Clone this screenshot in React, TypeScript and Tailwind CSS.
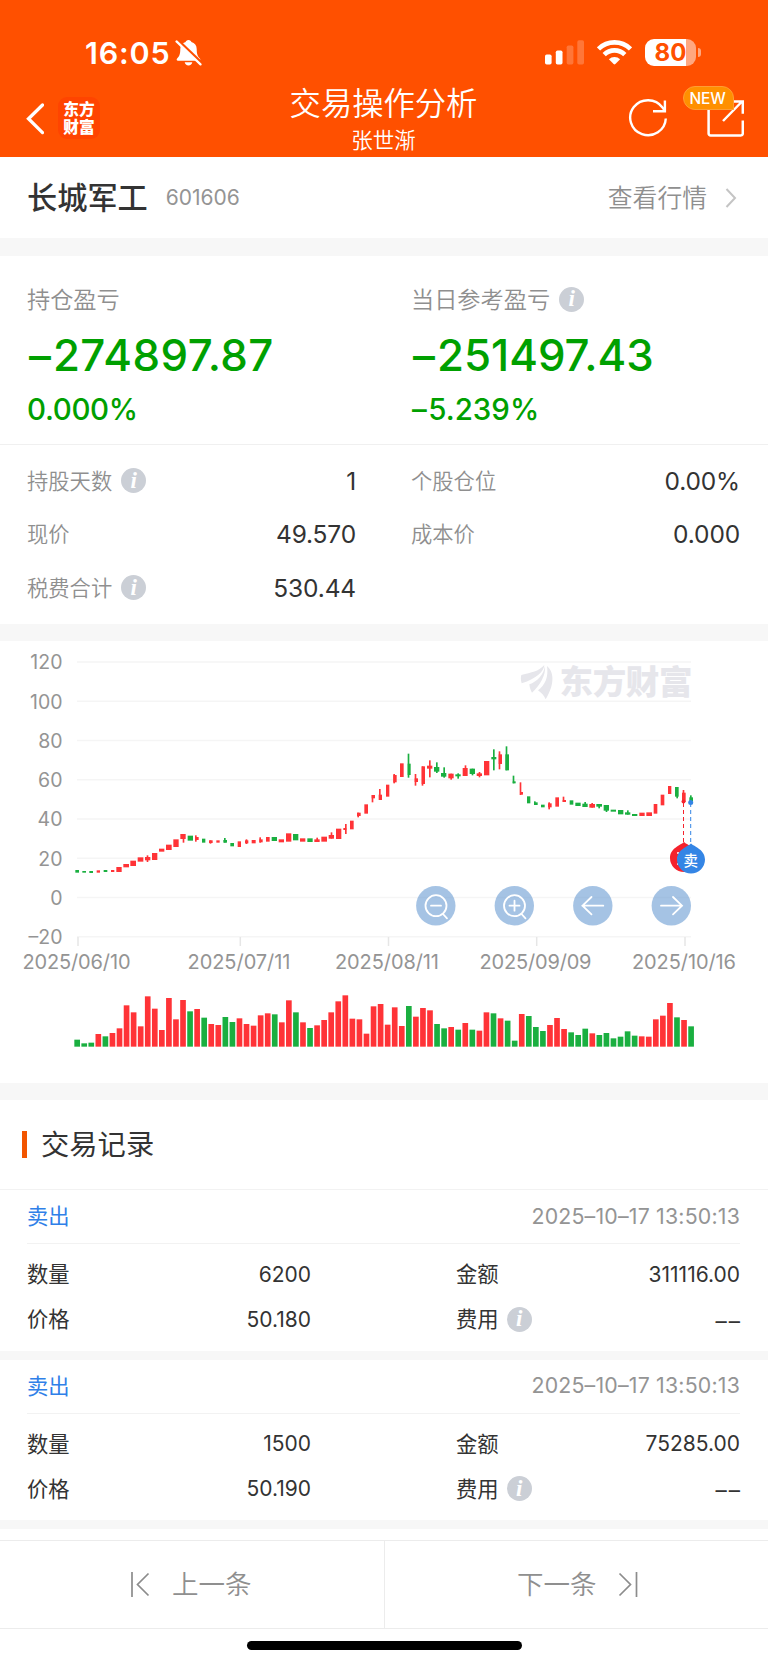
import React from "react";

const RED = "#ff3337";
const GREEN = "#1aaf40";

type Candle = {
  up: boolean;
  // x, right, top, bottom of the body
  body: [number, number, number, number];
  // x, top, bottom of the shadow
  wick?: [number, number, number];
};

const r = (a: number, b: number, c: number, d: number, wick?: [number, number, number]): Candle => ({
  up: true,
  body: [a, b, c, d],
  wick,
});
const g = (a: number, b: number, c: number, d: number, wick?: [number, number, number]): Candle => ({
  up: false,
  body: [a, b, c, d],
  wick,
});

// candle geometry in thirds of a pixel
const candles: Candle[] = [
  g(226, 237, 690, 698),
  g(247, 258, 693, 698),
  g(268, 279, 693, 699),
  r(290, 300, 691, 698),
  g(311, 322, 690, 696),
  r(333, 343, 690, 696),
  r(349, 365, 681, 696),
  r(370, 387, 672, 682),
  r(391, 408, 662, 678),
  r(413, 430, 652, 665),
  r(435, 451, 651, 661, [442, 646, 666]),
  r(456, 472, 639, 660),
  r(477, 493, 626, 635),
  r(498, 515, 614, 630),
  r(520, 536, 598, 621),
  r(541, 557, 582, 597, [550, 582, 608]),
  g(563, 579, 587, 602),
  r(585, 596, 591, 600, [587, 586, 605]),
  g(606, 616, 596, 608),
  r(627, 638, 601, 609, [631, 601, 611]),
  r(649, 659, 601, 608),
  g(670, 681, 600, 608, [674, 594, 608]),
  g(691, 702, 609, 619),
  r(713, 723, 604, 621),
  r(735, 745, 601, 610, [739, 598, 612]),
  r(755, 767, 600, 610),
  r(778, 788, 598, 607, [780, 592, 608]),
  r(798, 809, 591, 605),
  g(815, 831, 591, 603),
  r(836, 852, 598, 607),
  r(858, 874, 580, 605),
  g(879, 895, 582, 601),
  r(900, 916, 595, 605),
  g(922, 938, 595, 606),
  r(943, 959, 598, 606, [951, 593, 606]),
  r(964, 981, 590, 605),
  r(986, 1002, 585, 596, [994, 577, 596]),
  r(1008, 1024, 566, 597),
  r(1030, 1039, 564, 570, [1037, 552, 582]),
  r(1050, 1061, 542, 568),
  r(1071, 1082, 518, 528, [1074, 518, 532]),
  r(1093, 1104, 493, 521),
  r(1115, 1125, 465, 475, [1117, 465, 487]),
  r(1136, 1146, 464, 480, [1139, 447, 480]),
  r(1158, 1168, 434, 470),
  r(1180, 1190, 405, 427, [1182, 402, 430]),
  r(1200, 1211, 370, 411),
  g(1223, 1232, 371, 405, [1225, 341, 413]),
  r(1244, 1254, 415, 426, [1246, 402, 437]),
  r(1265, 1275, 379, 432, [1267, 379, 437]),
  r(1281, 1297, 377, 386, [1289, 361, 412]),
  g(1302, 1318, 381, 395, [1310, 367, 399]),
  g(1323, 1339, 399, 410, [1332, 382, 413]),
  r(1345, 1361, 401, 415, [1353, 401, 419]),
  g(1366, 1382, 403, 409, [1374, 400, 416]),
  r(1388, 1403, 384, 408, [1396, 376, 408]),
  g(1409, 1425, 386, 402, [1417, 386, 406]),
  r(1430, 1446, 400, 408, [1438, 396, 412]),
  r(1452, 1468, 363, 406),
  g(1474, 1489, 351, 358, [1481, 328, 391]),
  r(1496, 1506, 343, 372, [1498, 334, 388]),
  g(1516, 1527, 343, 391, [1519, 319, 391]),
  g(1538, 1547, 424, 430, [1540, 407, 430]),
  r(1560, 1569, 456, 464, [1561, 427, 465]),
  g(1581, 1591, 469, 490),
  g(1602, 1613, 487, 495, [1604, 484, 495]),
  g(1623, 1634, 494, 502),
  r(1644, 1655, 490, 502, [1647, 487, 508]),
  r(1666, 1677, 472, 500),
  r(1688, 1698, 480, 486, [1690, 470, 486]),
  g(1709, 1720, 481, 494),
  g(1726, 1742, 488, 498),
  g(1747, 1763, 491, 501, [1755, 486, 501]),
  r(1768, 1785, 492, 503, [1776, 489, 503]),
  g(1789, 1806, 492, 500, [1797, 492, 505]),
  g(1811, 1827, 495, 512, [1819, 495, 516]),
  g(1832, 1848, 509, 515),
  g(1854, 1870, 510, 523),
  g(1875, 1891, 517, 524, [1883, 511, 524]),
  g(1896, 1912, 522, 528),
  r(1918, 1934, 518, 528),
  r(1939, 1956, 517, 528),
  r(1961, 1972, 492, 521),
  r(1982, 1993, 464, 496),
  r(2004, 2014, 438, 462),
  g(2025, 2036, 441, 470, [2031, 441, 475]),
  r(2046, 2057, 458, 486, [2050, 450, 486]),
  g(2068, 2079, 472, 484, [2072, 466, 484]),
];

// tops of the volume bars, same unit, one for each candle
const volumes = [
  1199, 1210, 1208, 1182, 1189, 1179, 1165, 1096, 1117, 1159, 1069, 1106, 1170, 1074, 1138, 1080,
  1114, 1107, 1133, 1152, 1155, 1131, 1146, 1135, 1152, 1157, 1126, 1120, 1123, 1147, 1081, 1117,
  1147, 1164, 1156, 1140, 1117, 1084, 1066, 1136, 1138, 1181, 1099, 1092, 1154, 1102, 1158, 1098,
  1130, 1104, 1111, 1152, 1165, 1161, 1169, 1149, 1169, 1172, 1117, 1120, 1135, 1142, 1202, 1122,
  1128, 1161, 1173, 1155, 1134, 1167, 1177, 1185, 1166, 1180, 1185, 1179, 1195, 1190, 1174, 1187,
  1189, 1190, 1138, 1127, 1089, 1132, 1140, 1159,
];

const yLabels = ["120", "100", "80", "60", "40", "20", "0", "–20"];
const xLabels = [
  { text: "2025/06/10", x: 76.5, tick: 78, width: 108 },
  { text: "2025/07/11", x: 239, tick: 240.3, width: 103 },
  { text: "2025/08/11", x: 387, tick: 388.5, width: 104 },
  { text: "2025/09/09", x: 535.5, tick: 536.7, width: 112 },
  { text: "2025/10/16", x: 684, tick: 685, width: 104 },
];

const records = [
  { time: "2025–10–17 13:50:13", count: "6200", amount: "311116.00", price: "50.180" },
  { time: "2025–10–17 13:50:13", count: "1500", amount: "75285.00", price: "50.190" },
];

const InfoIcon = () => (
  <span className="mb-px ml-[9px] flex size-[25px] shrink-0 items-center justify-center rounded-full bg-[#cbcfd6] pb-px font-['Liberation_Serif',serif] text-[23px] leading-none font-bold text-white italic">
    i
  </span>
);

const StatusBar = () => (
  <div className="flex h-[84px] items-center pt-[21px] pr-[67px] pl-[85px]">
    <span className="text-[30.5px] font-semibold tracking-[0.8px]">16:05</span>
    <svg className="ml-[5px]" width="27" height="28" viewBox="0 0 27 28">
      <path
        d="M13.5 1c-1.8 0-2.6 1-2.9 2.100C7.300 4 5.300 6.700 5.300 10c0 5.800-1.300 7.600-3.200 9.600-.8.9-.5 2.100.9 2.100h21c1.400 0 1.700-1.200.9-2.100-1.900-2-3.200-3.800-3.200-9.600 0-3.300-2-6-5.300-6.900C16.100 2 15.300 1 13.500 1zM9.700 23.300h7.600c-.3 2-1.800 3.200-3.800 3.200s-3.500-1.200-3.800-3.200z"
        fill="#fff"
      />
      <path d="M2.500 1 27 24.300" stroke="#ff5000" strokeWidth="3" />
      <path d="M1.500 2.400 25.500 25.400" stroke="#fff" strokeWidth="2.200" strokeLinecap="round" />
    </svg>
    <svg className="ml-auto" width="39" height="25" viewBox="0 0 39 25" fill="#fff">
      <rect x="0" y="14.500" width="6.600" height="10" rx="1.700" />
      <rect x="10.800" y="10.500" width="6.700" height="14" rx="1.700" />
      <rect x="21.700" y="5.500" width="6.700" height="19" rx="1.700" opacity=".22" />
      <rect x="32.300" y="0.300" width="6.700" height="24.200" rx="1.700" opacity=".22" />
    </svg>
    <svg className="ml-[13px]" width="35" height="25" viewBox="0 0 35 25">
      <g fill="none" stroke="#fff" strokeWidth="4.600">
        <path d="M1.500 8.900a22.800 22.800 0 0 1 32 0" />
        <path d="M7.200 14.600a14.600 14.600 0 0 1 20.600 0" />
      </g>
      <path d="M11.900 19.300a8 8 0 0 1 11.200 0l-4.700 4.700a1.300 1.300 0 0 1-1.800 0z" fill="#fff" />
    </svg>
    <div className="ml-[13px] flex h-[27px] w-[51px] items-center justify-center rounded-[9px] bg-[linear-gradient(to_right,#fff_80%,#ffa780_80%)] text-[24px] font-bold text-[#ff5000]">
      80
    </div>
    <div className="ml-[1.5px] h-[9px] w-[3.5px] rounded-r-full bg-[#ffa780]" />
  </div>
);

const NavBar = () => (
  <div className="grid h-[73px] grid-cols-[1fr_auto_1fr] px-[24px]">
    <div className="flex items-start pt-[13px] pl-[2px]">
      <svg className="mt-[6px]" width="18" height="32" viewBox="0 0 18 32">
        <path d="M16.500 2 2.500 15.800 16.500 29.600" fill="none" stroke="#fff" strokeWidth="3.300" strokeLinecap="round" />
      </svg>
      <div className="ml-[14px] flex size-[42px] items-center justify-center rounded-[9px] bg-[#ff4400] font-['Noto_Sans_CJK_SC',sans-serif] text-[15.7px] leading-[18.3px] font-black">
        <p>
          东方
          <br />
          财富
        </p>
      </div>
    </div>
    <div className="flex flex-col items-center pr-px font-[350]">
      <h1 className="pt-px text-[31.3px] leading-[38px]">交易操作分析</h1>
      <p className="mt-[7px] text-[21.5px] leading-[20px]">张世渐</p>
    </div>
    <div className="flex items-start justify-end pt-[14px]">
      <svg width="40" height="40" viewBox="0 0 40 40" fill="none" stroke="#fff" strokeWidth="2.400">
        <path d="M37.800 20.500A17.800 17.500 0 1 1 34.500 9.500L37 12.800" />
        <path d="M36.900 2.500v10.700H25" />
      </svg>
      <div className="relative ml-[39px]">
        <svg width="37" height="40" viewBox="0 0 37 40" fill="none" stroke="#fff" strokeWidth="2.500">
          <path d="M1.600 6v29.500a2 2 0 0 0 2 2h30.200a2 2 0 0 0 2-2V22.500" />
          <path d="M16 23 35.500 3M24 3.400h11.800v12.400" />
        </svg>
        <span className="absolute -top-[12px] -left-[24px] flex h-[24px] w-[51px] items-center justify-center rounded-[12px] rounded-br-none border border-[#ff9d33] bg-[#ff9000] pt-px pr-[2px] text-[15.5px] font-medium tracking-[-0.2px]">
          NEW
        </span>
      </div>
    </div>
  </div>
);

const Profit = ({ children }: { children: React.ReactNode }) => (
  <div className="flex h-[76px] items-center text-[43.8px] font-medium">
    <span className="mr-[2px] ml-[2px]">–</span>
    {children}
  </div>
);

type FieldProps = { label: string; value?: string; info?: boolean };

const Field = ({ label, value, info }: FieldProps) => (
  <div className="flex h-[53.5px] items-center">
    <span className="pt-px text-[21.3px] font-[350] text-[#8f8f8f]">{label}</span>
    {info && <InfoIcon />}
    <span className="ml-auto text-[24.5px] font-[380] tracking-[-0.15px] text-[#333]">{value}</span>
  </div>
);

const Summary = () => (
  <section>
    <div className="grid grid-cols-[384px_1fr] pt-[25px] pb-[20px] pl-[27px] text-[#00a000]">
      <div>
        <div className="flex h-[37px] items-center text-[23.2px] font-[350] text-[#8f8f8f]">
          <span className="pt-[2px]">持仓盈亏</span>
        </div>
        <Profit>
          <span className="tracking-[0.45px]">274897.87</span>
        </Profit>
        <div className="flex h-[30px] items-center text-[29.5px] font-medium tracking-[-0.35px]">0.000%</div>
      </div>
      <div>
        <div className="flex h-[37px] items-center text-[23.2px] font-[350] text-[#8f8f8f]">
          <span className="pt-[2px]">当日参考盈亏</span>
          <InfoIcon />
        </div>
        <Profit>
          <span>251497.43</span>
        </Profit>
        <div className="flex h-[30px] items-center text-[29.5px] font-medium">
          <span className="mr-[1.5px] ml-px">–</span>
          <span>5.239%</span>
        </div>
      </div>
    </div>
    <div className="grid grid-cols-2 gap-x-[55px] border-t border-[#f0f0f0] pt-[9.5px] pr-[28px] pb-[9px] pl-[27px]">
      <Field label="持股天数" value="1" info />
      <Field label="个股仓位" value="0.00%" />
      <Field label="现价" value="49.570" />
      <Field label="成本价" value="0.000" />
      <Field label="税费合计" value="530.44" info />
    </div>
  </section>
);

const Chart = () => (
  <svg className="block" width="768" height="442" viewBox="0 641 768 442">
    {yLabels.map((label, i) => (
      <g key={label}>
        <path d={`M77 ${662 + i * 39.25}H691`} stroke="#f5f5f5" strokeWidth="1.500" />
        <text x="62.500" y={669.3 + i * 39.25} textAnchor="end" fontSize="19.500" fontWeight="370" fill="#949494">
          {label}
        </text>
      </g>
    ))}
    {xLabels.map(({ text, x, tick, width }) => (
      <g key={text}>
        <path d={`M${tick} 937v9`} stroke="#e6e6e6" strokeWidth="1.500" />
        <text x={x} y="969" textAnchor="middle" textLength={width} fontSize="20" fontWeight="370" fill="#949494">
          {text}
        </text>
      </g>
    ))}

    {/* watermark */}
    <g fill="#e6e6eb">
      <path
        transform="translate(512 640) scale(0.333333)"
        d="M28 105C60 96 78 96 97 75 95 95 75 115 29 130 26 120 26 112 28 105ZM99 78C102 105 85 135 60 158 55 150 53 142 52 133 75 125 95 105 99 78ZM105 78C125 95 130 130 101 178 97 168 88 158 78 151 100 135 110 110 105 78Z"
      />
      <text
        x="559.500"
        y="694"
        textLength="133"
        fontSize="33.500"
        fontWeight="900"
        fontFamily="Noto Sans CJK SC, sans-serif"
      >
        东方财富
      </text>
    </g>

    <g transform="translate(0 640) scale(0.333333)">
      {candles.map(({ up, body, wick }, i) => (
        <g key={i} fill={up ? RED : GREEN}>
          <rect x={body[0]} y={body[2]} width={body[1] - body[0]} height={body[3] - body[2]} />
          {wick && <rect x={wick[0] - 2} y={wick[1]} width="5" height={wick[2] - wick[1]} />}
          <rect x={223 + i * 21.17} y={volumes[i]} width="17" height={1220 - volumes[i]} />
        </g>
      ))}
    </g>

    {/* buy and sell markers */}
    <path d="M683.500 803v40" stroke="#f5222d" strokeDasharray="4 3" />
    <circle cx="683.500" cy="801.500" r="2" fill="#f5222d" />
    <path d="M690.700 803v40" stroke="#3485e5" strokeDasharray="4 3" />
    <circle cx="690.700" cy="802.500" r="2.500" fill="#3485e5" />
    <path d="M684 842c3 3 14 6 14 16a14 14 0 0 1-28 0c0-10 11-13 14-16z" fill="#f5222d" />
    <path d="M678 852v13" stroke="#fff" strokeWidth="1.500" strokeDasharray="2 3.500" />
    <path d="M691 843.500c3 3 14 6 14 16a14 14 0 0 1-28 0c0-10 11-13 14-16z" fill="#3485e5" />
    <text x="690.700" y="865.500" textAnchor="middle" fontSize="14.500" fontWeight="500" fill="#fff">
      卖
    </text>

    {/* zoom and pan buttons */}
    {[435.8, 514.3, 592.8, 671.3].map((x) => (
      <circle key={x} cx={x} cy="905.700" r="19.700" fill="#5b92ce" fillOpacity=".55" />
    ))}
    <g fill="none" stroke="#fff" strokeWidth="1.800" strokeLinecap="round">
      <circle cx="436" cy="905.700" r="10.500" />
      <path d="M431 905.700h10M443 914l4 4.300" />
      <circle cx="514.500" cy="905.700" r="10.500" />
      <path d="M509.500 905.700h10M514.500 900.700v10M521.500 914l4 4.300" />
      <path d="M603.300 905.700h-21M591.500 897l-9 8.700 9 8.700" />
      <path d="M661 905.700h21M673 897l9 8.700-9 8.700" />
    </g>
  </svg>
);

type RecordProps = { record: (typeof records)[number] };

const TradeRecord = ({ record }: RecordProps) => (
  <article className="h-[160.5px] bg-white pr-[28px] pl-[27px] text-[21.3px] font-[380] text-[#333]">
    <div className="flex h-[53px] items-center justify-between">
      <span className="pt-px text-[#2f80e8]">卖出</span>
      <time className="font-[370] tracking-[0.2px] text-[#949494]">{record.time}</time>
    </div>
    <div className="grid auto-rows-[45px] grid-cols-[284px_1fr] gap-x-[145px] border-t border-[#f2f2f2] pt-[8px]">
      <div className="flex items-center justify-between">
        <span className="pt-px">数量</span>
        <span className="text-[21px]">{record.count}</span>
      </div>
      <div className="flex items-center justify-between">
        <span className="pt-px">金额</span>
        <span className="text-[21px]">{record.amount}</span>
      </div>
      <div className="flex items-center justify-between">
        <span className="pt-px">价格</span>
        <span className="text-[21px]">{record.price}</span>
      </div>
      <div className="flex items-center">
        <span className="-mr-px pt-px">费用</span>
        <InfoIcon />
        <span className="-mr-[2px] ml-auto pt-[2px] text-[22.5px] tracking-[2px]">––</span>
      </div>
    </div>
  </article>
);

const Footer = () => (
  <footer className="bg-white pt-[11px]">
    <div className="grid h-[89px] grid-cols-2 border-y border-[#ececec] text-[26.5px] font-[350] text-[#8f8f8f]">
      <button className="flex items-center pl-[130px]">
        <svg className="mr-[22px]" width="20" height="27" viewBox="0 0 20 27" fill="none" stroke="#8c8c8c" strokeWidth="1.700">
          <path d="M2 1v25M18.500 2.500 7.500 13.500l11 11" />
        </svg>
        <span className="pt-px">上一条</span>
      </button>
      <button className="flex items-center border-l border-[#ececec] pl-[132px]">
        <span className="pt-px">下一条</span>
        <svg className="ml-[21px]" width="20" height="27" viewBox="0 0 20 27" fill="none" stroke="#8c8c8c" strokeWidth="1.700">
          <path d="M18.500 1v25M1.500 2.500l11 11-11 11" />
        </svg>
      </button>
    </div>
    <div className="flex h-[36px] justify-center pt-[12px]">
      <div className="h-[9px] w-[275px] rounded-full bg-black" />
    </div>
  </footer>
);

export default function App() {
  return (
    <div className="h-[1665px] w-[768px] overflow-hidden bg-white font-['Inter','Noto_Sans_CJK_SC',sans-serif]">
      <header className="bg-[#ff5000] text-white">
        <StatusBar />
        <NavBar />
      </header>

      <div className="flex h-[81px] items-center pr-[31px] pl-[27px]">
        <h2 className="pt-[2px] text-[30.2px] font-medium text-[#333]">长城军工</h2>
        <span className="ml-[18px] text-[21px] font-[370] text-[#949494]">601606</span>
        <span className="ml-auto pt-[2px] text-[24.8px] font-[350] text-[#8f8f8f]">查看行情</span>
        <svg className="ml-[18px]" width="12" height="20" viewBox="0 0 12 20">
          <path d="m1.500 1 8.500 9-8.500 9" fill="none" stroke="#c4c4c4" strokeWidth="2" />
        </svg>
      </div>
      <div className="h-[18px] bg-[#f7f7f7]" />

      <Summary />
      <div className="h-[17px] bg-[#f7f7f7]" />

      <Chart />
      <div className="h-[17px] bg-[#f7f7f7]" />

      <div className="flex h-[90px] items-center border-b border-[#f2f2f2] pl-[22px]">
        <span className="h-[27px] w-[5px] bg-[#f25500]" />
        <h3 className="ml-[14px] pt-[2px] text-[28.3px] font-[380] text-[#333]">交易记录</h3>
      </div>
      {records.map((record) => (
        <React.Fragment key={record.amount}>
          <TradeRecord record={record} />
          <div className="h-[9px] bg-[#f7f7f7]" />
        </React.Fragment>
      ))}

      <Footer />
    </div>
  );
}
